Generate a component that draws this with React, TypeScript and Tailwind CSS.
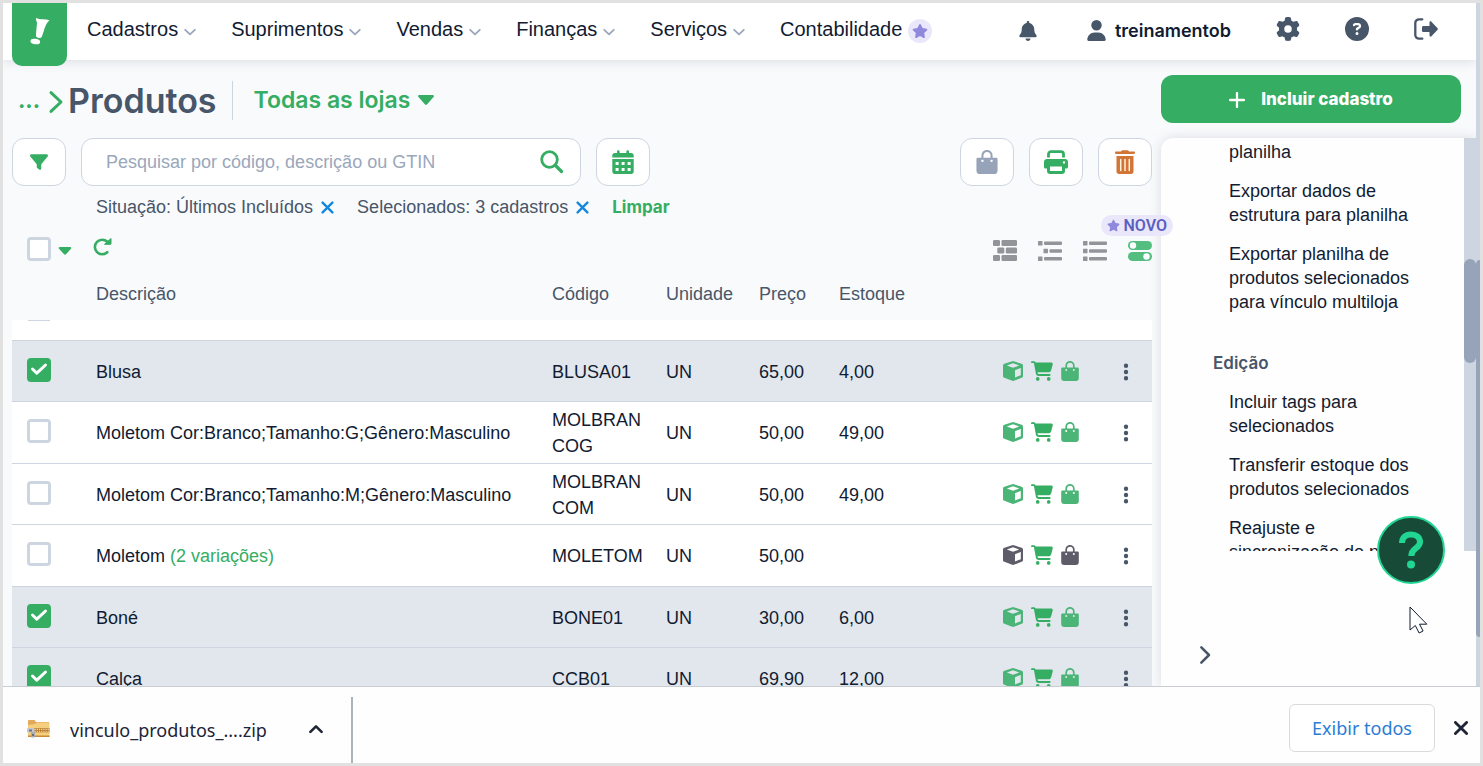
import React from "react";
import {
  FaBell,
  FaUser,
  FaGear,
  FaCircleQuestion,
  FaCartShopping,
  FaFilter,
  FaStar,
  FaEllipsisVertical,
} from "react-icons/fa6";

type Product = {
  name: string;
  variations?: string;
  code: string;
  unit: string;
  price: string;
  stock: string;
  selected: boolean;
  muted?: boolean;
};

const products: Product[] = [
  { name: "Blusa", code: "BLUSA01", unit: "UN", price: "65,00", stock: "4,00", selected: true },
  { name: "Moletom Cor:Branco;Tamanho:G;Gênero:Masculino", code: "MOLBRANCOG", unit: "UN", price: "50,00", stock: "49,00", selected: false },
  { name: "Moletom Cor:Branco;Tamanho:M;Gênero:Masculino", code: "MOLBRANCOM", unit: "UN", price: "50,00", stock: "49,00", selected: false },
  { name: "Moletom", variations: "(2 variações)", code: "MOLETOM", unit: "UN", price: "50,00", stock: "", selected: false, muted: true },
  { name: "Boné", code: "BONE01", unit: "UN", price: "30,00", stock: "6,00", selected: true },
  { name: "Calça", code: "CCB01", unit: "UN", price: "69,90", stock: "12,00", selected: true },
];

const menus = ["Cadastros", "Suprimentos", "Vendas", "Finanças", "Serviços"];

const exportActions = [
  "planilha",
  "Exportar dados de estrutura para planilha",
  "Exportar planilha de produtos selecionados para vínculo multiloja",
];

const editActions = [
  "Incluir tags para selecionados",
  "Transferir estoque dos produtos selecionados",
  "Reajuste e sincronização de preços",
];

function Chevron({ className, d, width = 2 }: { className: string; d: string; width?: number }) {
  return (
    <svg aria-hidden="true" viewBox="0 0 12 12" className={className} fill="none" stroke="currentColor" strokeWidth={width} strokeLinecap="round" strokeLinejoin="round">
      <path d={d} />
    </svg>
  );
}

function Caret({ className }: { className: string }) {
  return (
    <svg aria-hidden="true" viewBox="0 0 16 10" className={className} fill="currentColor">
      <path d="M1.4 0h13.2c1.2 0 1.7 1.3.9 2.1L9.2 9.2c-.7.8-1.8.8-2.4 0L.5 2.1C-.3 1.3.2 0 1.4 0Z" />
    </svg>
  );
}

function Bag({ className }: { className: string }) {
  return (
    <svg aria-hidden="true" viewBox="0 0 18 20" className={className}>
      <path d="M5.200 8V4.600a3.800 3.800 0 0 1 7.600 0V8" fill="none" stroke="currentColor" strokeWidth="1.700" />
      <path fill="currentColor" fillRule="evenodd" d="M1.500 6.500h15c.8 0 1.300.5 1.300 1.200V17a3 3 0 0 1-3 3H3.200a3 3 0 0 1-3-3V7.700c0-.7.5-1.200 1.300-1.200ZM5.200 8a1 1 0 1 0 0 2 1 1 0 0 0 0-2Zm7.600 0a1 1 0 1 0 0 2 1 1 0 0 0 0-2Z" />
    </svg>
  );
}

function Cube({ className }: { className: string }) {
  return (
    <svg aria-hidden="true" viewBox="0 0 20 20" className={className} fill="currentColor">
      <path fillRule="evenodd" d="M9.200.2a3 3 0 0 1 1.600 0l7.800 2.600c.9.300 1.400 1 1.400 1.900v10.200c0 .9-.5 1.600-1.400 1.900l-7.800 3a3 3 0 0 1-1.600 0l-7.800-3C.5 16.500 0 15.800 0 14.900V4.700c0-.9.5-1.600 1.400-1.900ZM10 2.300 3.800 4.500 10 6.800l6.200-2.300ZM17.800 7 12 9.200v7.300l5.800-2.300Z" />
    </svg>
  );
}

function SearchIcon() {
  return (
    <svg aria-hidden="true" viewBox="0 0 24 24" className="size-6" fill="none" stroke="currentColor" strokeLinecap="round">
      <circle cx="9.500" cy="9.500" r="7.800" strokeWidth="2.800" />
      <path d="m15.500 15.500 6 6" strokeWidth="3.200" />
    </svg>
  );
}

function CalendarIcon() {
  return (
    <svg aria-hidden="true" viewBox="0 0 22 24" className="h-6 w-[22px]" fill="currentColor">
      <path d="M5 1.500a1.300 1.300 0 0 1 2.600 0V3h6.800V1.500a1.300 1.300 0 0 1 2.600 0V3h2.200C20.700 3 21.700 4 21.700 5.300V7.500H.3V5.300C.3 4 1.300 3 2.800 3H5Z" />
      <path fillRule="evenodd" d="M.3 9h21.400v12.500c0 1.400-1 2.400-2.500 2.400H2.800c-1.500 0-2.500-1-2.500-2.400Zm3.300 3v3h3v-3Zm6 0v3h3v-3Zm6 0v3h3v-3Zm-12 6v3h3v-3Zm6 0v3h3v-3Zm6 0v3h3v-3Z" />
    </svg>
  );
}

function PrinterIcon() {
  return (
    <svg aria-hidden="true" viewBox="0 0 24 24" className="size-6">
      <path d="M4.500 7.500V4.300c0-1.500 1-2.600 2.600-2.600h9.800c1.600 0 2.600 1.100 2.600 2.600v3.200" fill="none" stroke="currentColor" strokeWidth="2.800" />
      <path fill="currentColor" fillRule="evenodd" d="M3 9h18c1.700 0 3 1.300 3 3v5c0 .9-.6 1.500-1.500 1.500H21V21c0 1.700-1.200 3-3 3H6c-1.800 0-3-1.300-3-3v-2.500H1.500C.6 18.500 0 17.900 0 17v-5c0-1.700 1.300-3 3-3Zm17 2.200a1.200 1.200 0 1 0 0 2.400 1.200 1.200 0 0 0 0-2.400ZM6 16.500V21h12v-4.500Z" />
    </svg>
  );
}

function TrashIcon() {
  return (
    <svg aria-hidden="true" viewBox="0 0 20 24" className="h-6 w-5">
      <path fill="currentColor" d="M6 1.500 7 .3h6l1 1.200h5c1.300 0 1.300 2.400 0 2.400H1c-1.300 0-1.300-2.400 0-2.400Z" />
      <path fill="currentColor" d="M1.500 6h17v15.500c0 1.500-1 2.500-2.500 2.500H4c-1.500 0-2.500-1-2.500-2.500Z" />
      <path d="M5.700 9.500v11M10 9.500v11m4.300-11v11" stroke="#fff4dc" strokeWidth="1.500" strokeLinecap="round" />
    </svg>
  );
}

function RefreshIcon() {
  return (
    <svg aria-hidden="true" viewBox="0 0 20 20" className="size-5" fill="none" stroke="currentColor">
      <path d="M15.300 15.200A7.300 7.300 0 1 1 15.300 4.800" strokeWidth="2.600" strokeLinecap="round" />
      <path d="M12.500 7.300h6c.3 0 .5-.2.5-.5V1.500Z" fill="currentColor" strokeWidth="1" strokeLinejoin="round" />
    </svg>
  );
}

function ExitIcon() {
  return (
    <svg aria-hidden="true" viewBox="0 0 24 22" className="h-[22px] w-6">
      <path d="M8.300 1.300H5A3.700 3.700 0 0 0 1.300 5v12A3.700 3.700 0 0 0 5 20.700h3.300" fill="none" stroke="currentColor" strokeWidth="2.300" strokeLinecap="round" />
      <path fill="currentColor" d="M9.500 7.900h6V4.500c0-1 1.200-1.500 1.900-.8l6 6.300c.6.600.6 1.400 0 2l-6 6.300c-.7.700-1.900.2-1.900-.8v-3.400h-6c-.9 0-1.500-.6-1.500-1.400V9.300c0-.8.600-1.400 1.500-1.400Z" />
    </svg>
  );
}

function BlocksIcon() {
  return (
    <svg aria-hidden="true" viewBox="0 0 24 22" className="h-[22px] w-6" fill="currentColor">
      <rect x="0" y="0" width="7" height="6" rx="1.2" />
      <rect x="8.500" y="0" width="15.500" height="6" rx="1.2" />
      <rect x="4.300" y="7.500" width="7" height="6" rx="1.2" />
      <rect x="12.800" y="7.500" width="11.200" height="6" rx="1.2" />
      <rect x="0" y="15" width="7" height="6" rx="1.2" />
      <rect x="8.500" y="15" width="15.500" height="6" rx="1.2" />
    </svg>
  );
}

function TreeListIcon({ indent }: { indent: boolean }) {
  const x = indent ? 5.5 : 0;
  return (
    <svg aria-hidden="true" viewBox="0 0 24 22" className="h-[22px] w-6" fill="currentColor">
      <rect x="0" y="1" width="4.500" height="4.500" rx="0.500" />
      <rect x="6" y="1.500" width="18" height="3.600" rx="1" />
      <rect x={x} y="8.700" width="4.500" height="4.500" rx="0.500" />
      <rect x={x + 6} y="9.200" width={18 - x} height="3.600" rx="1" />
      <rect x="0" y="16.400" width="4.500" height="4.500" rx="0.500" />
      <rect x="6" y="16.900" width="18" height="3.600" rx="1" />
    </svg>
  );
}

function TogglesIcon() {
  return (
    <svg aria-hidden="true" viewBox="0 0 24 22" className="h-[22px] w-6">
      <rect x="0" y="1" width="24" height="9" rx="4.500" fill="#53be80" />
      <rect x="0" y="12" width="24" height="9" rx="4.500" fill="#53be80" />
      <circle cx="5" cy="5.500" r="3.200" fill="white" />
      <circle cx="18.500" cy="16.500" r="3.200" fill="white" />
    </svg>
  );
}

function ZipIcon() {
  return (
    <svg aria-hidden="true" viewBox="0 0 23 18" className="h-[18px] w-[23px]">
      <path d="M1 1.200C1 .5 1.400 0 2 0h5.500L9 2h13v4H1Z" fill="#e2a860" />
      <path d="M1 5 8 4l2-1.500h12.500V17H1Z" fill="#f5cf7d" />
      <path d="M1 15.500h21.500V17H1Z" fill="#c98a35" />
      <rect x="7" y="8.300" width="15.500" height="4" fill="#b77a2c" />
      <path d="M7.500 9.500h15M7.500 11.300h15" stroke="#f0e2bd" strokeWidth="1" strokeDasharray="1.200 1" />
      <rect x="0" y="8" width="7.500" height="4.600" rx="1" fill="#c3c7cc" />
      <rect x="2" y="9.500" width="3" height="2" fill="#6f757c" />
      <rect x="4" y="12" width="4" height="5.500" rx="1" fill="#a9adb3" />
      <rect x="5.200" y="14" width="1.600" height="2" fill="#5d636b" />
    </svg>
  );
}

function Checkbox({ label, checked = false }: { label: string; checked?: boolean }) {
  return (
    <label className="grid size-6 shrink-0">
      <input
        type="checkbox"
        aria-label={label}
        defaultChecked={checked}
        className="peer col-start-1 row-start-1 size-6 appearance-none rounded border-3 border-[#cdd5e1] bg-white checked:border-[#35ad62] checked:bg-[#35ad62]"
      />
      <svg aria-hidden="true" viewBox="0 0 24 24" className="pointer-events-none col-start-1 row-start-1 hidden size-6 peer-checked:block" fill="none" stroke="white" strokeWidth="3" strokeLinecap="round" strokeLinejoin="round">
        <path d="m5.500 11 4.300 4.200 8.700-8.200" />
      </svg>
    </label>
  );
}

function ToolButton({ label, color, children }: { label: string; color: string; children: React.ReactNode }) {
  return (
    <button type="button" aria-label={label} className={`flex h-12 w-[54px] shrink-0 items-center justify-center rounded-xl border border-[#cdd5e1] bg-white ${color}`}>
      {children}
    </button>
  );
}

function FilterChip({ children }: { children: string }) {
  return (
    <span className="flex items-center gap-2">
      {children}
      <button type="button" aria-label={`Remover ${children}`} className="text-[#1488dc]">
        <Chevron className="size-[13px]" d="M1.500 1.500 10.500 10.500M10.500 1.500 1.500 10.500" width={2.200} />
      </button>
    </span>
  );
}

function ActionList({ items }: { items: string[] }) {
  return (
    <ul className="flex flex-col gap-[15px]">
      {items.map((item) => (
        <li key={item}>
          <a href="#" className="block leading-6">{item}</a>
        </li>
      ))}
    </ul>
  );
}

function Header() {
  return (
    <header className="relative z-20 flex h-[57px] shrink-0 items-center bg-white pb-1.5 pl-[9px] pr-[38px] shadow-[0_2px_10px_rgba(72,86,105,0.16)]">
      <a href="#" aria-label="Início" className="flex h-[63px] w-[55px] shrink-0 justify-center self-start rounded-b-[10px] bg-[#35ad62] pt-[15px]">
        <svg aria-hidden="true" viewBox="0 0 20 27" className="h-[27px] w-5" fill="white">
          <path d="M6 0c1.800 1 4.500 1.200 7 1.300 2.300.1 4.400.3 6.500.9-2 1.800-3.700 4.600-4.800 7.800-1 3-1.800 6-2.900 8.700-.5 1.200-1.800 1.600-3.200 1.300-1.700-.4-2.800-1.300-2.700-2.700L7 5C7.100 3.500 5.700 2.800 6 0Z" />
          <ellipse cx="5.300" cy="23.500" rx="4.900" ry="2.700" transform="rotate(8 5.300 23.500)" />
        </svg>
      </a>
      <nav className="ml-5 flex items-center gap-[35px] text-xl text-[#111b31]">
        {menus.map((menu) => (
          <a key={menu} href="#" className="flex items-center gap-1.5 whitespace-nowrap">
            {menu}
            <Chevron className="mt-1.5 size-3 text-[#9aa7bb]" d="M1.200 3.800 6 8.400l4.800-4.600" width={1.8} />
          </a>
        ))}
        <a href="#" className="flex items-center gap-1.5 whitespace-nowrap">
          Contabilidade
          <span className="mt-1 flex size-6 items-center justify-center rounded-full bg-[#ebe7fb] text-[#8f88dc]">
            <FaStar aria-hidden="true" className="size-4" />
          </span>
        </a>
      </nav>
      <div className="ml-auto flex items-center gap-[45px] text-[#485669]">
        <button type="button" aria-label="Notificações" className="mr-[3px] mt-1">
          <FaBell className="size-5" />
        </button>
        <button type="button" className="mt-1 flex items-center gap-2 font-['Inter',sans-serif] text-lg font-semibold text-[#111b31]">
          <FaUser aria-hidden="true" className="size-[21px] text-[#485669]" />
          treinamentob
        </button>
        <button type="button" aria-label="Configurações">
          <FaGear className="size-6" />
        </button>
        <button type="button" aria-label="Ajuda">
          <FaCircleQuestion className="size-6" />
        </button>
        <button type="button" aria-label="Sair">
          <ExitIcon />
        </button>
      </div>
    </header>
  );
}

function Toolbar() {
  return (
    <>
      <div className="flex h-[78px] shrink-0 items-center pl-1.5 pt-0.5 font-['Inter',sans-serif]">
        <a href="#" aria-label="Voltar" className="flex items-center gap-1 text-[22px] font-bold text-[#35ad62]">
          ...
          <Chevron className="mt-1 size-6" d="M3.500 1.300 8.500 6l-5 4.700" width={1.5} />
        </a>
        <h1 className="text-[34px] font-semibold text-[#485669]">Produtos</h1>
        <span className="ml-[15px] mr-[21px] h-[39px] w-px bg-[#cdd5e1]" />
        <button type="button" className="flex items-center gap-2 whitespace-nowrap text-[23px] font-semibold text-[#35ad62]">
          Todas as lojas
          <Caret className="h-2.5 w-4" />
        </button>
      </div>

      <div className="flex shrink-0 items-center gap-[15px]">
        <ToolButton label="Filtrar" color="text-[#35ad62]">
          <FaFilter className="size-[18px]" />
        </ToolButton>
        <div className="flex h-12 w-[500px] items-center rounded-xl border border-[#cdd5e1] bg-white pl-6 pr-4">
          <input
            type="search"
            aria-label="Pesquisar por código, descrição ou GTIN"
            placeholder="Pesquisar por código, descrição ou GTIN"
            className="min-w-0 flex-1 bg-transparent text-lg outline-none placeholder:text-[#9aa7bb]"
          />
          <button type="button" aria-label="Pesquisar" className="text-[#35ad62]">
            <SearchIcon />
          </button>
        </div>
        <ToolButton label="Período" color="text-[#35ad62]">
          <CalendarIcon />
        </ToolButton>
        <div className="ml-auto flex gap-[15px]">
          <ToolButton label="Enviar para loja" color="text-[#97a3b8]">
            <Bag className="h-6 w-[22px]" />
          </ToolButton>
          <ToolButton label="Imprimir" color="text-[#35ad62]">
            <PrinterIcon />
          </ToolButton>
          <ToolButton label="Excluir" color="text-[#d37437]">
            <TrashIcon />
          </ToolButton>
        </div>
      </div>

      <div className="flex h-[42px] shrink-0 items-center gap-[23px] pl-[84px] text-lg text-[#485669]">
        <FilterChip>Situação: Últimos Incluídos</FilterChip>
        <FilterChip>Selecionados: 3 cadastros</FilterChip>
        <button type="button" className="font-['Inter',sans-serif] text-[17px] font-bold text-[#35ad62]">Limpar</button>
      </div>

      <div className="flex h-[42px] shrink-0 items-center pl-[15px]">
        <Checkbox label="Selecionar todos" />
        <button type="button" aria-label="Opções de seleção" className="ml-[7px] mt-1 text-[#35ad62]">
          <Caret className="h-2 w-3.5" />
        </button>
        <button type="button" aria-label="Atualizar" className="mb-1 ml-5 text-[#35ad62]">
          <RefreshIcon />
        </button>
        <div className="ml-auto flex items-center gap-[21px] pt-1 text-[#939499]">
          <button type="button" aria-label="Agrupado">
            <BlocksIcon />
          </button>
          <button type="button" aria-label="Hierarquia">
            <TreeListIcon indent />
          </button>
          <button type="button" aria-label="Lista">
            <TreeListIcon indent={false} />
          </button>
          <button type="button" aria-label="Nova visualização" className="relative">
            <TogglesIcon />
            <span className="absolute -right-[21px] bottom-[26px] flex h-[21px] items-center gap-1 rounded-full bg-[#ebe7fb] px-1.5 font-['Roboto',sans-serif] text-base font-semibold text-[#5b5fc0]">
              <FaStar aria-hidden="true" className="size-[13px] text-[#8f88dc]" />
              NOVO
            </span>
          </button>
        </div>
      </div>
    </>
  );
}

function ProductTable() {
  return (
    <div className="min-h-0 flex-1 overflow-hidden">
      <table className="w-full table-fixed border-collapse text-left text-lg leading-[26px] text-[#111b31]">
        <colgroup>
          <col className="w-[84px]" />
          <col />
          <col className="w-[114px]" />
          <col className="w-[93px]" />
          <col className="w-20" />
          <col className="w-[163px]" />
          <col className="w-[100px]" />
          <col className="w-[50px]" />
        </colgroup>
        <thead>
          <tr className="h-[50px] text-[#485669]">
            <th aria-label="Seleção" />
            <th className="pb-0.5 font-normal">Descrição</th>
            <th className="pb-0.5 font-normal">Código</th>
            <th className="pb-0.5 font-normal">Unidade</th>
            <th className="pb-0.5 font-normal">Preço</th>
            <th className="pb-0.5 font-normal">Estoque</th>
            <th aria-label="Canais" />
            <th aria-label="Ações" />
          </tr>
        </thead>
        <tbody>
          <tr className="h-5 bg-white">
            <td colSpan={8} className="p-0 pl-4 align-top">
              <div className="h-px w-[22px] bg-[#cdd5e1]" />
            </td>
          </tr>
          {products.map((product) => (
            <tr
              key={product.code}
              className={`h-[61px] border-y border-[#cdd5e1] odd:h-[62px] ${product.selected ? "bg-[#e2e7ee]" : "bg-white"}`}
            >
              <td className="pb-0.5 pl-[15px]">
                <Checkbox label={`Selecionar ${product.name}`} checked={product.selected} />
              </td>
              <td className="pt-0.5">
                {product.name}
                {product.variations && <span className="text-[#35ad62]"> {product.variations}</span>}
              </td>
              <td className="break-all pr-5 pt-0.5">{product.code}</td>
              <td className="pt-0.5">{product.unit}</td>
              <td className="pt-0.5">{product.price}</td>
              <td className="pt-0.5">{product.stock}</td>
              <td>
                <div className={`flex items-center gap-2 pl-px ${product.muted ? "text-[#5f5c69]" : "text-[#4bb477]"}`}>
                  <Cube className="size-5" />
                  <FaCartShopping aria-hidden="true" className="size-[22px] text-[#35ad62]" />
                  <Bag className="h-5 w-[18px]" />
                </div>
              </td>
              <td className="pt-0.5">
                <button type="button" aria-label={`Ações de ${product.name}`} className="ml-3.5 flex text-[#485669]">
                  <FaEllipsisVertical className="size-5" />
                </button>
              </td>
            </tr>
          ))}
        </tbody>
      </table>
    </div>
  );
}

function Sidebar() {
  return (
    <aside className="flex w-[315px] shrink-0 flex-col">
      <button type="button" className="my-[15px] mr-[15px] flex h-12 shrink-0 items-center justify-center gap-4 rounded-xl bg-[#35ad62] pt-0.5 font-['Inter',sans-serif] text-[17px] font-extrabold text-white">
        <Chevron className="size-4" d="M6 .8v10.400M.8 6h10.400" width={1.7} />
        Incluir cadastro
      </button>
      <div className="flex min-h-0 flex-1 flex-col rounded-tl-xl bg-[#fefefe] shadow-[0_0_12px_rgba(72,86,105,0.18)]">
        <div className="flex min-h-0 flex-1">
          <div className="flex-1 overflow-hidden pl-[68px] pr-[35px] pt-0.5 text-lg text-[#111b31]">
            <ActionList items={exportActions} />
            <h2 className="-ml-4 mb-[15px] mt-[37px] font-['Inter',sans-serif] text-[17px] font-semibold leading-6 text-[#485669]">Edição</h2>
            <ActionList items={editActions} />
          </div>
          <div aria-hidden="true" className="w-3 bg-[#cdd5e1] pt-[121px]">
            <div className="h-[104px] rounded-full bg-[#97a3b8]" />
          </div>
        </div>
        <div className="h-[135px] shrink-0 pl-[38px] pt-[94px] text-[#485669]">
          <button type="button" aria-label="Recolher painel" className="flex">
            <Chevron className="-ml-1 size-5" d="M3.800 1.400 8.400 6l-4.600 4.600" width={1.5} />
          </button>
        </div>
      </div>
    </aside>
  );
}

function DownloadBar() {
  return (
    <footer className="relative z-30 flex h-[77px] shrink-0 items-center border-t border-[#c9ccd0] bg-[#fefefe] pr-3 font-['Noto_Sans','Open_Sans',sans-serif] text-[#202437]">
      <div className="flex h-full items-center pl-6 pt-2">
        <ZipIcon />
        <span className="ml-5 whitespace-nowrap pt-0.5 text-lg">vinculo_produtos_....zip</span>
        <button type="button" aria-label="Opções do download" className="ml-[42px]">
          <Chevron className="size-3.5" d="M1.200 8.500 6 3.700l4.800 4.800" width={2.2} />
        </button>
      </div>
      <span className="ml-7 h-[66px] w-0.5 self-end bg-[#aab4bb]" />
      <button type="button" className="ml-auto mt-1.5 h-12 rounded-md border border-[#d8dade] bg-white px-[22px] text-lg text-[#2a7dd4]">
        Exibir todos
      </button>
      <button type="button" aria-label="Fechar barra de downloads" className="ml-[19px] mt-1.5">
        <Chevron className="size-3.5" d="M1.200 1.200 10.800 10.800M10.800 1.200 1.200 10.800" width={2.4} />
      </button>
    </footer>
  );
}

export default function App() {
  return (
    <div className="h-screen bg-[#e1e1e1] p-[3px] font-['Liberation_Sans',Arial,sans-serif]">
      <div className="flex h-full flex-col overflow-hidden bg-[#f9fafc]">
        <div className="relative flex min-h-0 flex-1">
          <div className="flex min-w-0 flex-1 flex-col">
            <Header />
            <div className="flex min-h-0 flex-1 gap-[9px] pl-[9px]">
              <main className="relative z-10 flex min-w-0 flex-1 flex-col">
                <Toolbar />
                <ProductTable />
              </main>
              <Sidebar />
            </div>
          </div>
          <div aria-hidden="true" className="relative z-20 w-1 shrink-0 bg-[#cdd5e1] pt-[257px]">
            <div className="h-[377px] rounded-l bg-[#97a3b8]" />
          </div>

          <button
            type="button"
            aria-label="Abrir assistente"
            className="absolute bottom-[102px] right-[35px] z-30 flex size-[68px] items-center justify-center rounded-full border-2 border-[#21d693] bg-[#174b38]"
          >
            <svg aria-hidden="true" viewBox="0 0 24 38" className="h-[38px] w-6" fill="none" stroke="#21d693">
              <path d="M3 12C3 6.500 6.500 3.500 12 3.500s9 3 9 7.500c0 3.500-2.200 4.800-4.700 6.700-2.600 2-4 3.400-4 7.300" strokeWidth="6" strokeLinejoin="round" />
              <circle cx="12" cy="33.500" r="4" fill="#21d693" stroke="none" />
            </svg>
          </button>
          <svg aria-hidden="true" viewBox="0 0 19 28" className="pointer-events-none absolute bottom-[52px] right-[52px] z-30 h-7 w-[19px]" fill="white" stroke="#111b31" strokeWidth="1">
            <path d="M1 1v23l5.300-4.500 3.800 7.500 4-2-3.600-6.800h7.300Z" />
          </svg>
        </div>
        <DownloadBar />
      </div>
    </div>
  );
}
